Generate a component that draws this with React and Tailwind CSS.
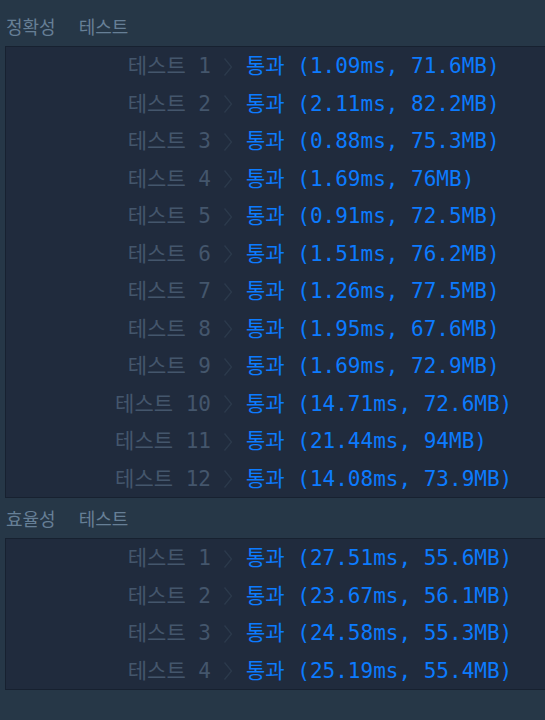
import React from "react";

const acc = [
  ["1", "1.09ms, 71.6MB"],
  ["2", "2.11ms, 82.2MB"],
  ["3", "0.88ms, 75.3MB"],
  ["4", "1.69ms, 76MB"],
  ["5", "0.91ms, 72.5MB"],
  ["6", "1.51ms, 76.2MB"],
  ["7", "1.26ms, 77.5MB"],
  ["8", "1.95ms, 67.6MB"],
  ["9", "1.69ms, 72.9MB"],
  ["10", "14.71ms, 72.6MB"],
  ["11", "21.44ms, 94MB"],
  ["12", "14.08ms, 73.9MB"],
];
const eff = [
  ["1", "27.51ms, 55.6MB"],
  ["2", "23.67ms, 56.1MB"],
  ["3", "24.58ms, 55.3MB"],
  ["4", "25.19ms, 55.4MB"],
];

const mono = "font-['DejaVu_Sans_Mono','Noto_Sans_CJK_KR',monospace]";

function Row({ n, r }) {
  return (
    <div className={`flex items-center h-[37.5px] pt-[2px] text-[21px] leading-[37.5px] whitespace-pre ${mono}`}>
      <div className="w-[205px] text-right text-[#44566c]">{`테스트 ${n}`}</div>
      <svg className="ml-[12px] mr-[13px]" width="10" height="20" viewBox="0 0 10 20" fill="none">
        <path d="M1.5 1.5 L8.5 10 L1.5 18.5" stroke="#2c3a4c" strokeWidth="1.3" />
      </svg>
      <div className="text-[#0c7bff]">{`통과 (${r})`}</div>
    </div>
  );
}

function Header({ a, top }) {
  return (
    <div className={`flex items-center h-[40px] ${top ? "mt-[6px]" : ""} pl-[6px] text-[18px] text-[#667f96] font-['Noto_Sans_CJK_KR',sans-serif]`}>
      <span>{a}</span>
      <span className="ml-[23px]">테스트</span>
    </div>
  );
}

export default function App() {
  return (
    <div className="w-[545px] h-[720px] bg-[#263747] overflow-hidden">
      <Header a="정확성" top />
      <div className="ml-[5px] bg-[#202b3d] border border-[#172130] border-r-0">
        {acc.map(([n, r]) => (
          <Row key={n} n={n} r={r} />
        ))}
      </div>
      <Header a="효율성" />
      <div className="ml-[5px] bg-[#202b3d] border border-[#172130] border-r-0">
        {eff.map(([n, r]) => (
          <Row key={n} n={n} r={r} />
        ))}
      </div>
    </div>
  );
}
